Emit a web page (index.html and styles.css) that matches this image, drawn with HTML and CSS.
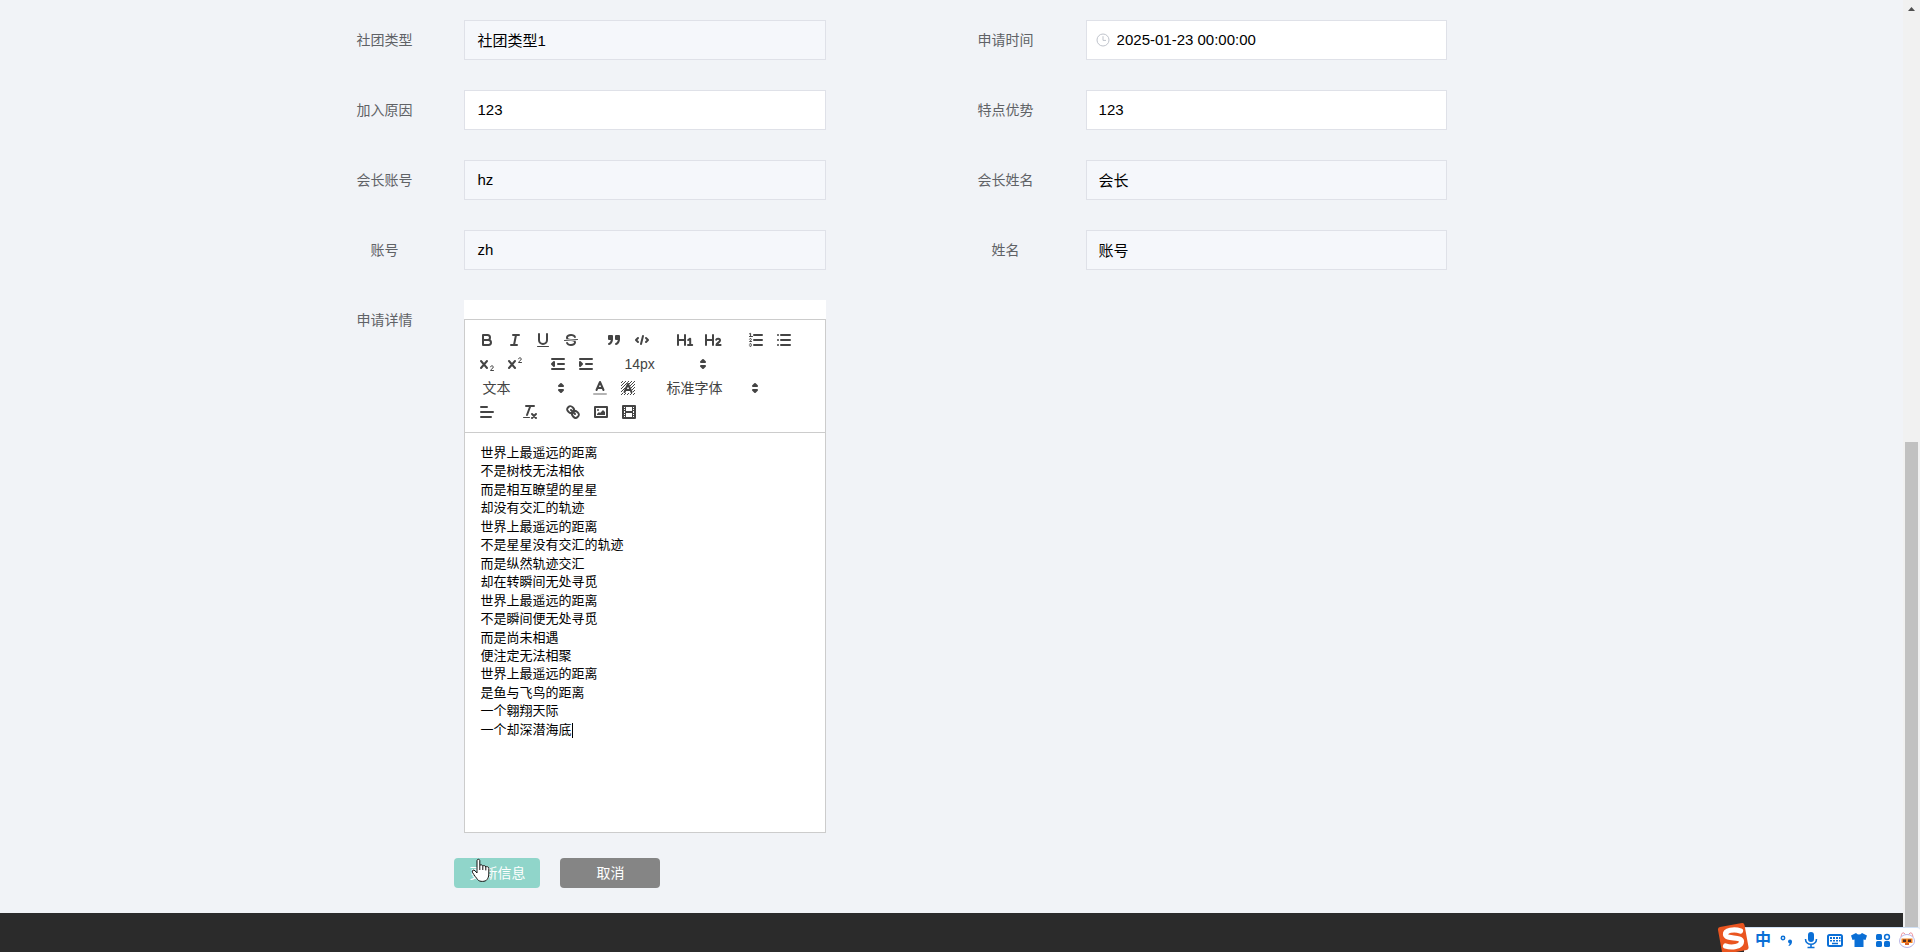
FILE: index.html
```html
<!DOCTYPE html>
<html lang="zh-CN">
<head>
<meta charset="utf-8">
<title>申请详情</title>
<link rel="stylesheet" href="styles.css">
</head>
<body>
<div class="page">
  <main class="content">
    <form class="form">
      <div class="fields">
        <div class="field"><label for="type">社团类型</label><input id="type" type="text" value="社团类型1" readonly></div>
        <div class="field"><label for="time">申请时间</label>
          <div class="date">
            <input id="time" type="text" value="2025-01-23 00:00:00">
            <svg class="clock" viewBox="0 0 14 14"><circle cx="7" cy="7" r="6"/><path d="M7 3.2V7.4H10"/></svg>
          </div>
        </div>
        <div class="field"><label for="reason">加入原因</label><input id="reason" type="text" value="123"></div>
        <div class="field"><label for="strength">特点优势</label><input id="strength" type="text" value="123"></div>
        <div class="field"><label for="leader">会长账号</label><input id="leader" type="text" value="hz" readonly></div>
        <div class="field"><label for="leadername">会长姓名</label><input id="leadername" type="text" value="会长" readonly></div>
        <div class="field"><label for="account">账号</label><input id="account" type="text" value="zh" readonly></div>
        <div class="field"><label for="name">姓名</label><input id="name" type="text" value="账号" readonly></div>
        <div class="field field-editor">
          <label id="detail-label">申请详情</label>
          <div class="editor">
            <div class="toolbar">
              <span class="group">
                <button type="button" aria-label="bold"><svg viewBox="0 0 18 18"><path class="s" d="M5,4H9.5A2.5,2.5,0,0,1,9.5,9H5Z"/><path class="s" d="M5,9h5.5A2.5,2.5,0,0,1,10.5,14H5Z"/></svg></button>
                <button type="button" aria-label="italic"><svg viewBox="0 0 18 18"><path class="s" d="M7,4H13M5,14H11M8,14L10,4"/></svg></button>
                <button type="button" aria-label="underline"><svg viewBox="0 0 18 18"><path class="s" d="M5,3V9a4,4,0,0,0,8,0V3"/><rect class="f" x="3" y="15" width="12" height="1" rx=".5"/></svg></button>
                <button type="button" aria-label="strike"><svg viewBox="0 0 18 18"><path class="s thin" d="M15.5,8.5L2.5,9.5"/><path class="f" d="M9.007,8C6.542,7.791,6,7.519,6,6.5,6,5.792,7.283,5,9,5c1.571,0,2.765.679,2.969,1.309a1,1,0,0,0,1.9-.617C13.356,4.106,11.354,3,9,3,6.2,3,4,4.538,4,6.5a3.2,3.2,0,0,0,.5,1.843Z"/><path class="f" d="M8.984,10C11.457,10.208,12,10.479,12,11.5c0,.708-1.283,1.5-3,1.5-1.571,0-2.765-.679-2.969-1.309a1,1,0,1,0-1.9.617C4.644,13.894,6.646,15,9,15c2.8,0,5-1.538,5-3.5a3.2,3.2,0,0,0-.5-1.843Z"/></svg></button>
              </span>
              <span class="group">
                <button type="button" aria-label="quote"><svg viewBox="0 0 18 18"><rect class="s f" x="4" y="5" width="3" height="3"/><rect class="s f" x="11" y="5" width="3" height="3"/><path class="s f" d="M7,8c0,4.031-3,5-3,5M14,8c0,4.031-3,5-3,5"/></svg></button>
                <button type="button" aria-label="code"><svg viewBox="0 0 18 18"><path class="s" d="M5,7L3,9L5,11M13,7L15,9L13,11M10,5L8,13"/></svg></button>
              </span>
              <span class="group">
                <button type="button" aria-label="heading 1"><svg viewBox="0 0 18 18"><path class="s" d="M2,4V14M9,4V14M2,9H9"/><path class="s mid" d="M12.2,9L14.2,7.7V14M12,14H16.2"/></svg></button>
                <button type="button" aria-label="heading 2"><svg viewBox="0 0 18 18"><path class="s" d="M2,4V14M9,4V14M2,9H9"/><path class="s mid" d="M12.2,8.8C12.6,7.4,16,7.3,16,9.4C16,11.2,12.6,12,12.4,14H16.6"/></svg></button>
              </span>
              <span class="group">
                <button type="button" aria-label="ordered list"><svg viewBox="0 0 18 18"><path class="s" d="M7,4H15M7,9H15M7,14H15"/><path class="s thin" d="M2.5,5.5H5.5M2.4,2.9L3.6,2.3V5.5M4.5,10.5h-2c0-.234,1.85-1.076,1.85-2.234A.959,.959,0,0,0,2.5,8.156M2.5,14.846a.959,.959,0,0,0,1.85-.109A.7,.7,0,0,0,3.75,14a.688,.688,0,0,0,.6-.736,.959,.959,0,0,0-1.85-.109"/></svg></button>
                <button type="button" aria-label="bullet list"><svg viewBox="0 0 18 18"><path class="s" d="M6,4H15M6,9H15M6,14H15M3,4H3M3,9H3M3,14H3"/></svg></button>
              </span>
              <span class="group">
                <button type="button" aria-label="subscript"><svg viewBox="0 0 18 18"><path class="s" d="M3,6L9,13M9,6L3,13"/><path class="s thin" d="M12.5,11.8C12.7,10.3,15.3,10.5,15.3,12C15.3,13.6,12.5,14.2,12.5,15.5H15.5"/></svg></button>
                <button type="button" aria-label="superscript"><svg viewBox="0 0 18 18"><path class="s" d="M3,6L9,13M9,6L3,13"/><path class="s thin" d="M12.5,3.8C12.7,2.3,15.3,2.5,15.3,4C15.3,5.6,12.5,6.2,12.5,7.5H15.5"/></svg></button>
              </span>
              <span class="group">
                <button type="button" aria-label="outdent"><svg viewBox="0 0 18 18"><path class="s" d="M3,14H15M3,4H15M9,9H15"/><path class="s f" d="M5,7V11L3,9Z"/></svg></button>
                <button type="button" aria-label="indent"><svg viewBox="0 0 18 18"><path class="s" d="M3,14H15M3,4H15M9,9H15"/><path class="s f" d="M3,7V11L5,9Z"/></svg></button>
              </span>
              <span class="group picker">
                <select aria-label="字号"><option>14px</option></select>
                <svg viewBox="0 0 18 18"><path class="s f" d="M7,11L9,13L11,11ZM7,7L9,5L11,7Z"/></svg>
              </span>
              <span class="group picker">
                <select aria-label="标题"><option>文本</option></select>
                <svg viewBox="0 0 18 18"><path class="s f" d="M7,11L9,13L11,11ZM7,7L9,5L11,7Z"/></svg>
              </span>
              <span class="group">
                <button type="button" aria-label="text color"><svg viewBox="0 0 18 18"><path class="s faint" d="M3,15H15"/><path class="s" d="M5.5,11L9,3L12.5,11M11.63,9H6.38"/></svg></button>
                <button type="button" aria-label="background color"><svg viewBox="0 0 18 18"><defs><clipPath id="hatch"><path clip-rule="evenodd" d="M2,2H16V16H2ZM9,3L4,14H14Z"/></clipPath></defs><path class="s thin" clip-path="url(#hatch)" d="M2,4L4,2M2,7L7,2M2,10L10,2M2,13L13,2M2,16L16,2M5,16L16,5M8,16L16,8M11,16L16,11M14,16L16,14"/><path class="s" d="M5.5,13L9,5L12.5,13M11.63,11H6.38"/></svg></button>
              </span>
              <span class="group picker picker-font">
                <select aria-label="字体"><option>标准字体</option></select>
                <svg viewBox="0 0 18 18"><path class="s f" d="M7,11L9,13L11,11ZM7,7L9,5L11,7Z"/></svg>
              </span>
              <span class="group">
                <button type="button" aria-label="align"><svg viewBox="0 0 18 18"><path class="s" d="M3,9H15M3,14H13M3,4H9"/></svg></button>
              </span>
              <span class="group">
                <button type="button" aria-label="clear format"><svg viewBox="0 0 18 18"><path class="s" d="M5,3H13M6,12L9.35,3M11,11L15,15M15,11L11,15"/><rect class="f" x="2" y="14" width="7" height="1" rx=".5"/></svg></button>
              </span>
              <span class="group">
                <button type="button" aria-label="link"><svg viewBox="0 0 18 18"><path class="s" d="M7,7L11,11M8.9,4.577a3.476,3.476,0,0,1,.36,4.679A3.476,3.476,0,0,1,4.577,8.9C3.185,7.5,2.035,6.4,4.217,4.217S7.5,3.185,8.9,4.577ZM13.423,9.1a3.476,3.476,0,0,0-4.679-.36,3.476,3.476,0,0,0,.36,4.679c1.392,1.392,2.5,2.542,4.679.36S14.815,10.5,13.423,9.1Z"/></svg></button>
                <button type="button" aria-label="image"><svg viewBox="0 0 18 18"><rect class="s" x="3" y="4" width="12" height="10"/><circle class="f" cx="6" cy="7" r="1"/><path class="f" d="M5,12V11L7,9L8,10L11,7L13,9V12Z"/></svg></button>
                <button type="button" aria-label="video"><svg viewBox="0 0 18 18"><rect class="s" x="3" y="3" width="12" height="12"/><path class="f" d="M5,3H6V15H5ZM12,3H13V15H12ZM5,8H13V10H5ZM3,5H6V6H3ZM3,7H6V8H3ZM3,10H6V11H3ZM3,12H6V13H3ZM12,5H15V6H12ZM12,7H15V8H12ZM12,10H15V11H12ZM12,12H15V13H12Z"/></svg></button>
              </span>
            </div>
            <div class="text" contenteditable="true" role="textbox" aria-multiline="true" aria-labelledby="detail-label">
              <p>世界上最遥远的距离</p>
              <p>不是树枝无法相依</p>
              <p>而是相互瞭望的星星</p>
              <p>却没有交汇的轨迹</p>
              <p>世界上最遥远的距离</p>
              <p>不是星星没有交汇的轨迹</p>
              <p>而是纵然轨迹交汇</p>
              <p>却在转瞬间无处寻觅</p>
              <p>世界上最遥远的距离</p>
              <p>不是瞬间便无处寻觅</p>
              <p>而是尚未相遇</p>
              <p>便注定无法相聚</p>
              <p>世界上最遥远的距离</p>
              <p>是鱼与飞鸟的距离</p>
              <p>一个翱翔天际</p>
              <p class="active-line">一个却深潜海底</p>
            </div>
          </div>
        </div>
      </div>
      <div class="actions">
        <button type="button" class="btn btn-save">更新信息
          <svg class="pointer" viewBox="0 0 20 25"><path d="M6 12.5V2.6C6 .9 8.8.9 8.8 2.6V7.6C9 6.4 11.6 6.5 11.8 8.2C12.2 7.2 14.6 7.4 14.8 9C15.4 8.2 17.8 8.6 17.8 10.4V16C17.8 19 16.8 20.3 16 21.6C14.6 23.8 8.6 24.2 6.6 21.6C5.4 19.8 3.2 17.4 1.4 14.2C.5 12.3 2.8 11.3 4 12.8L6 15V12.5M8.8 7.6V12M11.8 8.2V12M14.8 9V12.4"/></svg>
        </button>
        <button type="button" class="btn btn-cancel">取消</button>
      </div>
    </form>
    <footer class="footer"></footer>
  </main>
  <div class="scrollbar"><svg viewBox="0 0 17 17"><path d="M5 11H12L8.5 7Z"/></svg><span class="thumb"></span></div>
</div>
<div class="ime">
  <svg class="ime-logo" viewBox="0 0 32 32"><path fill="#ea5520" d="M3 5L25 1Q27 .7 27.5 3L31.5 25Q32 27.500 29.500 28L8 32Q5.500 32.500 5 30L1 8Q.6 5.500 3 5Z"/><path fill="none" stroke="#fff" stroke-width="5.200" stroke-linecap="round" d="M23.500 9C17 6.500 8 8.500 8.500 12.500C9 17.500 24.500 14.500 24.500 19.500C24.500 25 14.500 26 8.500 24"/></svg>
  <span class="ime-lang">中</span>
  <svg viewBox="0 0 18 18"><circle cx="5" cy="7" r="1.700" fill="none" stroke="#0a6fd6" stroke-width="1.500"/><path d="M10 10.500a2 2 0 1 1 4 0q0 3-3 4.500l-.6-.8q1.200-.8 1.300-1.800q-1.700-.3-1.700-1.900Z"/></svg>
  <svg viewBox="0 0 18 18"><rect x="6" y="1" width="6" height="10" rx="3"/><path fill="none" stroke="#0a6fd6" stroke-width="1.600" d="M3.500 8C3.500 15 14.500 15 14.500 8M9 13V17M5.500 16.500H12.500"/></svg>
  <svg viewBox="0 0 18 18"><rect x="2" y="4" width="14" height="11" rx="1.500" fill="none" stroke="#0a6fd6" stroke-width="2"/><path d="M4 6H6V8H4ZM7 6H9V8H7ZM10 6H12V8H10ZM13 6H14.500V8H13ZM4 9H6V10.500H4ZM7 9H9V10.500H7ZM10 9H12V10.500H10ZM13 9H14.500V10.500H13ZM6 11.800H12V13.300H6Z"/></svg>
  <svg viewBox="0 0 18 18"><path d="M6 2Q9 5 12 2L17 4.500L15.500 9L13.500 8.500V16H4.500V8.500L2.500 9L1 4.500Z"/></svg>
  <svg viewBox="0 0 18 18"><rect x="2" y="3" width="6" height="6" rx="1.500"/><circle cx="13" cy="6" r="2.400" fill="none" stroke="#0a6fd6" stroke-width="1.500"/><rect x="2" y="10" width="6" height="6" rx="1.500"/><rect x="10" y="10" width="6" height="6" rx="1.500"/></svg>
  <svg viewBox="0 0 18 18"><path fill="#fff" stroke="#f0929c" d="M3 6Q4-1 7.500 3.500M10.500 3.500Q14-1 15 6"/><ellipse cx="9" cy="10" rx="7.500" ry="6.500" fill="#fff" stroke="#b9b4e6"/><path fill="#f58220" d="M3.500 7.500H14.500V12H3.500Z"/><path fill="#4b2b25" d="M5 8.500H8V11H5ZM10 8.500H13V11H10Z"/><path fill="#d9622b" d="M7 12H11V14H7Z"/></svg>
</div>
</body>
</html>
```
FILE: styles.css
```css
* { box-sizing: border-box; }

body {
  margin: 0;
  overflow: hidden;
  background: #f1f3f7;
  color: #606266;
  font: 14px "Liberation Sans", "Noto Sans CJK SC", sans-serif;
}

button, input, select { font-family: inherit; }

.page { display: flex; min-height: 100vh; }

.content { flex: 1; display: flex; flex-direction: column; }

.form { width: 68%; margin: 0 auto; padding: 20px 0 25px; }

.fields {
  display: grid;
  grid-template-columns: 48% 48%;
  row-gap: 30px;
}

.field {
  display: flex;
  align-items: flex-start;
  padding-right: 100px;
}

.field label {
  flex: 0 0 160px;
  line-height: 40px;
  text-align: center;
}

.field input {
  flex: 1;
  min-width: 0;
  width: 100%;
  height: 40px;
  padding: 0 12px 2px;
  border: 1px solid #dfe1e8;
  border-radius: 0;
  background: #fff;
  color: #000;
  font-size: 15px;
}

.field input:read-only { background: #f5f7fb; }

.date { position: relative; flex: 1; }
.date input { padding-left: 30px; }

.clock {
  position: absolute;
  left: 10px;
  top: 13px;
  width: 14px;
  fill: none;
  stroke: #c0c4cc;
}

.editor { flex: 1; min-width: 0; padding-top: 19px; background: #fff; }

.toolbar {
  display: flex;
  flex-wrap: wrap;
  padding: 8px;
  border: 1px solid #ccc;
}

.group { display: flex; height: 24px; margin-right: 15px; }

.toolbar button {
  width: 28px;
  height: 24px;
  padding: 3px 5px;
  border: 0;
  background: none;
}

.toolbar svg { display: block; width: 18px; height: 18px; }

.s { fill: none; stroke: #444; stroke-width: 2; stroke-linecap: round; stroke-linejoin: round; }
.s.f, .f { fill: #444; }
.thin { stroke-width: 1; }
.mid { stroke-width: 2; }
.faint { opacity: .4; }

.picker { position: relative; width: 98px; }
.picker-font { width: 108px; }

.picker select {
  width: 100%;
  padding: 0 0 0 9px;
  border: 0;
  appearance: none;
  background: none;
  color: #444;
  font-size: 14px;
}

.picker svg { position: absolute; right: 1px; top: 3px; pointer-events: none; }

.text {
  height: 400px;
  padding: 11px 15px;
  border: 1px solid #ccc;
  border-top: 0;
  outline: 0;
  color: #000;
  font-size: 13px;
  line-height: 1.42;
}

.text p { margin: 0; }

.active-line::after {
  content: "";
  display: inline-block;
  width: 1px;
  height: 15px;
  background: #000;
  vertical-align: middle;
}

.actions { display: flex; gap: 20px; padding: 25px 0 0 150px; }

.btn {
  height: 30px;
  padding: 0 0 2px;
  border: 0;
  border-radius: 4px;
  color: #fff;
  font-size: 14px;
}

.btn-save { position: relative; width: 86px; background: #90d5ca; }
.btn-cancel { width: 100px; background: #858585; }

.pointer {
  position: absolute;
  left: 17px;
  top: 0;
  width: 20px;
  height: 25px;
  fill: #fff;
  stroke: #111;
  stroke-linejoin: round;
}

.footer { flex: 1; min-height: 39px; background: #2b2b2b; }

.scrollbar {
  display: flex;
  flex-direction: column;
  width: 17px;
  padding-bottom: 17px;
  background: #f1f1f1;
}

.scrollbar svg { width: 17px; fill: #505050; }
.thumb { flex: 0 0 auto; height: 493px; margin: auto 2px 0; background: #c1c1c1; }

.ime {
  position: fixed;
  right: 0;
  bottom: 0;
  display: flex;
  align-items: center;
  gap: 6px;
  height: 25px;
  padding: 0 4px 0 10px;
  border-top: 1px solid #cfe0f5;
  border-radius: 0 3px 0 0;
  background: #fff;
}

.ime svg { width: 18px; height: 18px; fill: #0a6fd6; }
.ime-lang { width: 18px; color: #0a6fd6; font-size: 16px; font-weight: bold; line-height: 24px; text-align: center; }
.ime .ime-logo { position: absolute; left: -27px; top: -6px; width: 32px; height: 32px; }
```
